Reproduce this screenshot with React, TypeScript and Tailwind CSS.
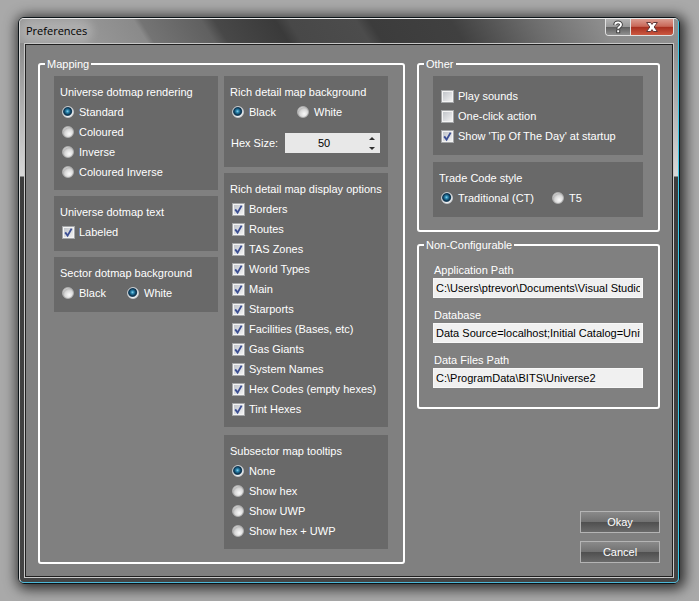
import { useState, type ReactNode } from "react";
import { clsx } from "clsx";

type GroupProps = {
  title: string;
  className?: string;
  children: ReactNode;
};

function Group({ title, className, children }: GroupProps) {
  return (
    <fieldset className={clsx("min-w-0 rounded-[3px] border-2 border-white", className)}>
      <legend className="ml-[5px] px-[2px] leading-4">{title}</legend>
      {children}
    </fieldset>
  );
}

type PanelProps = {
  title?: string;
  className?: string;
  children: ReactNode;
};

function Panel({ title, className, children }: PanelProps) {
  return (
    <div role="group" aria-label={title} className={clsx("bg-[#696969] pl-[8px]", className)}>
      {title && <div className="-ml-[2px] truncate pt-[6px] leading-5">{title}</div>}
      {children}
    </div>
  );
}

type RadioProps = {
  name: string;
  label: string;
  checked?: boolean;
  className?: string;
};

function Radio({ name, label, checked, className }: RadioProps) {
  return (
    <label className={clsx("flex h-5 items-center gap-1 whitespace-nowrap", className)}>
      <input
        type="radio"
        name={name}
        defaultChecked={checked}
        className="h-3 w-3 shrink-0 appearance-none rounded-full border border-[#b0b0b0] bg-[radial-gradient(circle_at_60%_65%,#fafafa_0,#d8d8d8_40%,#b8b8b8_58%,#f0f0f0_72%)] bg-origin-border checked:border-[#c8ccd0] checked:bg-[radial-gradient(circle_at_46%_44%,#8cd4ec_0,#2a86b0_16%,#0c3450_38%,#143c58_44%,#f4f4f4_56%)]"
      />
      <span className="pl-px">{label}</span>
    </label>
  );
}

function Checkbox({ label, checked }: { label: string; checked?: boolean }) {
  return (
    <label className="flex h-5 items-center gap-1 whitespace-nowrap">
      <span className="grid h-[13px] w-[13px] shrink-0">
        <input
          type="checkbox"
          defaultChecked={checked}
          className="peer col-start-1 row-start-1 h-[13px] w-[13px] appearance-none border border-[#a4a6a8] bg-[linear-gradient(135deg,#bcc0c6,#f6f6f6)] shadow-[inset_0_0_0_1px_#f4f4f4]"
        />
        <svg
          viewBox="0 0 13 13"
          className="pointer-events-none invisible col-start-1 row-start-1 h-[13px] w-[13px] peer-checked:visible"
        >
          <path d="M3.2 6.4 L5.6 9.6 L9.6 2.6" fill="none" stroke="#3c4f94" strokeWidth="1.9" />
        </svg>
      </span>
      {label}
    </label>
  );
}

function PathField({ id, label, value }: { id: string; label: string; value: string }) {
  return (
    <div>
      <label htmlFor={id} className="block pl-px leading-4">
        {label}
      </label>
      <input
        id={id}
        readOnly
        defaultValue={value}
        className="block h-5 w-full border border-[#f8f8f8] bg-[#f0f0f0] px-[2px] text-black outline-none"
      />
    </div>
  );
}

function DialogButton({ children }: { children: ReactNode }) {
  return (
    <button
      type="button"
      className="h-[22px] w-20 border border-[#b4b4b4] bg-[linear-gradient(#8a8a8a,#727272_48%,#505050_52%,#6a6a6a)] leading-4"
    >
      {children}
    </button>
  );
}

function HexSize() {
  const [size, setSize] = useState(50);

  return (
    <div className="mt-[11px] flex items-center pr-2">
      <label htmlFor="hex-size" className="-ml-px w-[54px] shrink-0">
        Hex Size:
      </label>
      <div className="flex h-5 min-w-0 flex-1 bg-[#e8e8e8]">
        <input
          id="hex-size"
          inputMode="numeric"
          value={size}
          onChange={(e) => setSize(Number(e.target.value) || 0)}
          className="min-w-0 flex-1 bg-transparent text-center text-black outline-none"
        />
        <div className="flex w-[17px] flex-col pt-px">
          <button type="button" aria-label="Increase" className="grid flex-1 place-items-center" onClick={() => setSize(size + 1)}>
            <svg viewBox="0 0 6 3" className="h-[3px] w-[6px]">
              <path d="M3 0 L6 3 H0 Z" fill="#303030" />
            </svg>
          </button>
          <button type="button" aria-label="Decrease" className="grid flex-1 place-items-center" onClick={() => setSize(size - 1)}>
            <svg viewBox="0 0 6 3" className="h-[3px] w-[6px]">
              <path d="M0 0 H6 L3 3 Z" fill="#303030" />
            </svg>
          </button>
        </div>
      </div>
    </div>
  );
}

function TitleBar() {
  return (
    <div className="-mx-1 flex h-6 justify-between overflow-hidden rounded-t-[4px] bg-[linear-gradient(58deg,#9a9a9a_0,#989898_10%,#8a8a8a_19%,#747474_20%,#606060_29%,#484848_31%,#3a3a3a_40%,#484848_42%,#4c4c4c_52%,#3c3c3c_54%,#404040_66%,#6c6c6c_78%,#8c8c8c_88%,#909090)] pr-1 pl-[6px]">
      <h1 className="self-center rounded-full bg-white/20 font-['Open_Sans',sans-serif] text-[11px] leading-3 text-black shadow-[0_0_8px_6px_rgba(255,255,255,0.2)]">
        Preferences
      </h1>
      <div className="flex h-[17px] overflow-hidden rounded-b-[4px] border border-t-0 border-[#e0e0e0]">
        <button
          type="button"
          aria-label="Help"
          className="grid w-[25px] place-items-center border-r border-[#e0e0e0] bg-[linear-gradient(#b4b4b4,#989898_48%,#606060_52%,#909090)]"
        >
          <svg viewBox="0 0 12 14" className="h-[14px] w-3">
            <path d="M3.2 5 C3.2 1.6 9 1.6 9 4.8 C9 6.8 6.2 6.6 6.2 9" fill="none" stroke="#404040" strokeWidth="3.8" />
            <path d="M4.2 9.4 h4 v3.8 h-4 z" fill="#404040" />
            <path d="M3.2 4.8 C3.2 1.6 9 1.6 9 4.8 C9 6.8 6.2 6.6 6.2 8.8" fill="none" stroke="#fff" strokeWidth="1.9" />
            <path d="M5.2 10.2 h2 v2 h-2 z" fill="#fff" />
          </svg>
        </button>
        <button
          type="button"
          aria-label="Close"
          className="grid w-[42px] place-items-center bg-[linear-gradient(#dc9c90,#c86858_46%,#a83020_52%,#cc5840)]"
        >
          <svg viewBox="0 0 12 10" className="h-[10px] w-3">
            <path d="M0.6 0.5 H4.6 L6 2.4 L7.4 0.5 H11.4 L8.2 5 L11.4 9.5 H7.4 L6 7.6 L4.6 9.5 H0.6 L3.8 5 Z" fill="#fff" stroke="#603838" strokeWidth="1" />
          </svg>
        </button>
      </div>
    </div>
  );
}

const displayOptions = [
  "Borders",
  "Routes",
  "TAS Zones",
  "World Types",
  "Main",
  "Starports",
  "Facilities (Bases, etc)",
  "Gas Giants",
  "System Names",
  "Hex Codes (empty hexes)",
  "Tint Hexes",
];

function App() {
  return (
    <div className="min-h-screen bg-[#a9a9a9] py-[17px] pr-[19px] pl-[18px] font-['Liberation_Sans',Arial,sans-serif] text-[11px] text-white">
      <div className="rounded-[6px] border border-[#0c1418] shadow-[2px_2px_13px_3px_rgba(0,0,0,0.75)]">
        <div className="rounded-[5px] border border-t-[#e8e8e8] border-r-[#3cc8e8] border-b-[#4cb8d8] border-l-[#d8d8d8] bg-[linear-gradient(#8c8c8c_0,#8c8c8c_24px,#d8d8d8_157px,#3c3c3c_158px,#444_100%)] px-1 pb-1">
          <TitleBar />
          <div className="border border-[#c8c8c8]">
            <div className="grid grid-cols-[367fr_243fr] gap-3 border border-[#202020] bg-[#808080] px-3 pt-[11px] pb-3">
              <Group title="Mapping">
                <div className="grid grid-cols-2 gap-[6px] pt-1 pr-[15px] pb-[13px] pl-[14px]">
                  <div className="flex min-w-0 flex-col gap-[6px]">
                    <Panel title="Universe dotmap rendering" className="pb-2">
                      <Radio name="rendering" label="Standard" checked />
                      <Radio name="rendering" label="Coloured" />
                      <Radio name="rendering" label="Inverse" />
                      <Radio name="rendering" label="Coloured Inverse" />
                    </Panel>
                    <Panel title="Universe dotmap text" className="pb-[9px]">
                      <Checkbox label="Labeled" checked />
                    </Panel>
                    <Panel title="Sector dotmap background" className="pb-[9px]">
                      <div className="flex">
                        <Radio name="sector-background" label="Black" className="w-[65px]" />
                        <Radio name="sector-background" label="White" checked />
                      </div>
                    </Panel>
                  </div>
                  <div className="flex min-w-0 flex-col gap-[6px]">
                    <Panel title="Rich detail map background" className="pb-[14px]">
                      <div className="flex">
                        <Radio name="map-background" label="Black" checked className="w-[65px]" />
                        <Radio name="map-background" label="White" />
                      </div>
                      <HexSize />
                    </Panel>
                    <Panel title="Rich detail map display options" className="mb-[2px] pb-2">
                      {displayOptions.map((option) => (
                        <Checkbox key={option} label={option} checked />
                      ))}
                    </Panel>
                    <Panel title="Subsector map tooltips" className="pb-2">
                      <Radio name="tooltips" label="None" checked />
                      <Radio name="tooltips" label="Show hex" />
                      <Radio name="tooltips" label="Show UWP" />
                      <Radio name="tooltips" label="Show hex + UWP" />
                    </Panel>
                  </div>
                </div>
              </Group>

              <div className="flex min-w-0 flex-col">
                <Group title="Other">
                  <div className="flex flex-col gap-[7px] pt-1 pr-[15px] pb-[13px] pl-[14px]">
                    <Panel className="pt-[10px] pb-[9px]">
                      <Checkbox label="Play sounds" />
                      <Checkbox label="One-click action" />
                      <Checkbox label="Show 'Tip Of The Day' at startup" checked />
                    </Panel>
                    <Panel title="Trade Code style" className="pb-[9px]">
                      <div className="flex">
                        <Radio name="trade-code" label="Traditional (CT)" checked className="w-[111px]" />
                        <Radio name="trade-code" label="T5" />
                      </div>
                    </Panel>
                  </div>
                </Group>
                <Group title="Non-Configurable" className="mt-[5px]">
                  <div className="flex flex-col gap-[9px] pt-[9px] pr-[15px] pb-[19px] pl-[14px]">
                    <PathField id="app-path" label="Application Path" value="C:\Users\ptrevor\Documents\Visual Studio 2008\Projects" />
                    <PathField id="database" label="Database" value="Data Source=localhost;Initial Catalog=Universe" />
                    <PathField id="data-path" label="Data Files Path" value="C:\ProgramData\BITS\Universe2" />
                  </div>
                </Group>
                <div className="mt-auto flex flex-col items-end gap-2 pt-4 pb-px">
                  <DialogButton>Okay</DialogButton>
                  <DialogButton>Cancel</DialogButton>
                </div>
              </div>
            </div>
          </div>
        </div>
      </div>
    </div>
  );
}

export default App;
